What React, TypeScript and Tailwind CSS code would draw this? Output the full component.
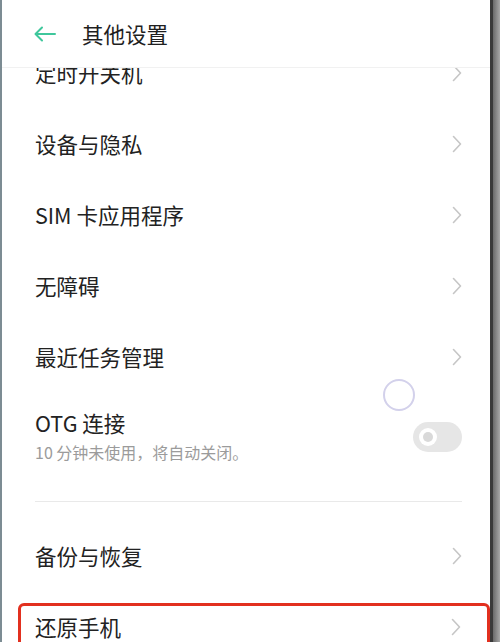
import React from 'react';

const font = { fontFamily: '"Noto Sans CJK SC", "Noto Sans", sans-serif' };

function Chevron() {
  return (
    <svg width="10" height="18" viewBox="0 0 10 18" fill="none" className="shrink-0">
      <path d="M1.5 1.5 L8.5 9 L1.5 16.5" stroke="#c6c6c6" strokeWidth="1.6" strokeLinecap="round" strokeLinejoin="round" />
    </svg>
  );
}

function Row({ label }: { label: string }) {
  return (
    <div className="h-[71px] flex items-center justify-between pl-[33px] pr-[28px]">
      <span className="text-[21.5px] leading-[28px] text-[#222]">{label}</span>
      <Chevron />
    </div>
  );
}

export default function App() {
  const rows = ['定时开关机', '设备与隐私', 'SIM 卡应用程序', '无障碍', '最近任务管理'];

  return (
    <div className="w-[500px] h-[642px] flex overflow-hidden bg-white" style={font}>
      {/* left frame edge */}
      <div className="w-[2px] bg-[#7c8c93]" />

      <div className="flex-1 flex flex-col relative">
        {/* Header */}
        <div className="h-[68px] shrink-0 flex items-center border-b border-[#f1f1f1] bg-white relative z-10">
          <svg width="24" height="16" viewBox="0 0 24 16" fill="none" className="ml-[31px]">
            <path d="M22 8 H3 M9 1.5 L2.5 8 L9 14.5" stroke="#3fc79c" strokeWidth="2" strokeLinecap="round" strokeLinejoin="round" />
          </svg>
          <span className="ml-[25px] text-[21.5px] leading-[28px] text-[#1f1f1f]">其他设置</span>
        </div>

        {/* Scrolled list */}
        <div className="flex-1 overflow-hidden">
          <div className="-mt-[31px]">
            {rows.map(r => (
              <Row key={r} label={r} />
            ))}

            {/* OTG */}
            <div className="h-[96px] flex items-start justify-between pl-[33px] pr-[28px]">
              <div className="flex flex-col pt-[17px]">
                <span className="text-[21.5px] leading-[28px] text-[#222]">OTG 连接</span>
                <span className="mt-[5px] text-[16px] leading-[20px] text-[#9b9b9b]">10 分钟未使用，将自动关闭。</span>
              </div>
              <div className="mt-[30px] w-[49px] h-[30px] rounded-full bg-[#e6e6e6] flex items-center pl-[6px]">
                <div className="w-[18px] h-[18px] rounded-full bg-white flex items-center justify-center">
                  <div className="w-[10px] h-[10px] rounded-full bg-[#d9d9d9]" />
                </div>
              </div>
            </div>

            <div className="mt-[13px] mb-[18px] ml-[33px] mr-[28px] h-px bg-[#e9e9e9]" />

            <Row label="备份与恢复" />

            {/* highlighted row */}
            <div className="mt-[12px] ml-[16px] h-[80px] border-[3px] border-[#e2301f] rounded-[6px] flex items-start justify-between pl-[14px] pr-[26px] pt-[7px]">
              <span className="text-[21.5px] leading-[28px] text-[#222]">还原手机</span>
              <div className="mt-[5px]">
                <Chevron />
              </div>
            </div>
          </div>
        </div>

        {/* touch indicator */}
        <div className="absolute left-[381px] top-[379px] w-[32px] h-[32px] rounded-full border-2 border-[#d3d1eb]" />
      </div>

      {/* right frame edge */}
      <div className="w-[3px] bg-[#3a3a3a]" />
      <div className="w-[7px] bg-gradient-to-r from-[#6a6a6a] to-[#a8a8a8]" />
    </div>
  );
}
